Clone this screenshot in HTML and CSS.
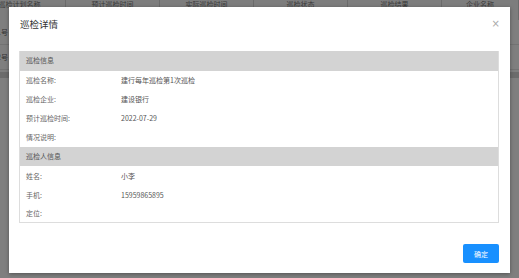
FILE: index.html
```html
<!DOCTYPE html>
<html lang="zh">
<head>
<meta charset="utf-8">
<link rel="stylesheet" href="styles.css">
</head>
<body>
<div class="screen">
  <div class="page">
    <div class="row head">
      <div class="cell c1">巡检计划名称</div>
      <div class="cell">预计巡检时间</div>
      <div class="cell">实际巡检时间</div>
      <div class="cell">巡检状态</div>
      <div class="cell">巡检结果</div>
      <div class="cell">企业名称</div>
    </div>
    <div class="row body-row">
      <div class="cell c1 tail">计划1号</div>
      <div class="cell"></div><div class="cell"></div><div class="cell"></div><div class="cell"></div><div class="cell"></div>
    </div>
    <div class="row body-row">
      <div class="cell c1 tail">计划2号</div>
      <div class="cell"></div><div class="cell"></div><div class="cell"></div><div class="cell"></div><div class="cell"></div>
    </div>
    <div class="scrollbar"></div>
  </div>
</div>

<div class="mask"></div>

<div class="modal">
  <div class="modal-header">
    <span class="modal-title">巡检详情</span>
    <span class="modal-close">×</span>
  </div>
  <div class="detail">
    <div class="section">巡检信息</div>
    <div class="item"><span class="label">巡检名称:</span><span class="value">建行每年巡检第1次巡检</span></div>
    <div class="item"><span class="label">巡检企业:</span><span class="value">建设银行</span></div>
    <div class="item"><span class="label">预计巡检时间:</span><span class="value">2022-07-29</span></div>
    <div class="item"><span class="label">情况说明:</span><span class="value"></span></div>
    <div class="section">巡检人信息</div>
    <div class="item"><span class="label">姓名:</span><span class="value">小李</span></div>
    <div class="item"><span class="label">手机:</span><span class="value">15959865895</span></div>
    <div class="item last"><span class="label">定位:</span><span class="value"></span></div>
  </div>
  <div class="modal-footer">
    <button class="btn-primary">确定</button>
  </div>
</div>
</body>
</html>
```

FILE: styles.css
```css
* { box-sizing: border-box; }
html, body { margin: 0; padding: 0; }
body {
  width: 519px;
  height: 278px;
  overflow: hidden;
  background: #fff;
  font-family: "Noto Sans CJK SC", "Noto Sans", sans-serif;
  position: relative;
}

.screen {
  width: 519px;
  height: 278px;
  overflow: hidden;
}
.page {
  margin-left: -26px;
  width: 545px;
}
.row {
  display: grid;
  grid-template-columns: 92px repeat(4, 94px) 77px;
}
.head .cell {
  height: 20px;
  line-height: 8px;
  text-align: center;
  font-size: 7px;
  color: #777;
  border-right: 1px solid #d6d6d6;
  background: #fafafa;
  overflow: hidden;
  white-space: nowrap;
}
.body-row {
  height: 25px;
  border-bottom: 1px solid #e6e6e6;
}
.body-row .cell {
  font-size: 7px;
  color: #666;
  line-height: 25px;
}
.tail { text-align: right; padding-right: 58px; white-space: nowrap; }
.scrollbar {
  margin-top: 2px;
  height: 6px;
  background: #d8d8d8;
}

.mask {
  position: absolute;
  inset: 0;
  background: rgba(0, 0, 0, 0.5);
}

.modal {
  position: absolute;
  left: 9px;
  top: 7px;
  width: 501px;
  height: 266px;
  background: #fff;
  padding: 0 11px 0 10px;
  box-shadow: 0 1px 4px rgba(0,0,0,0.35);
  display: flex;
  flex-direction: column;
}
.modal-header {
  height: 44px;
  display: flex;
  align-items: flex-start;
  justify-content: space-between;
  padding-top: 11px;
}
.modal-title {
  font-size: 9.5px;
  color: #333;
  line-height: 12px;
  margin-left: 1px;
}
.modal-close {
  font-family: "DejaVu Sans", sans-serif;
  font-size: 10px;
  line-height: 10px;
  color: #aaa;
  margin-top: 1px;
  margin-right: -1px;
}

.detail {
  border: 1px solid #ddd;
  border-top: none;
}
.section {
  height: 19.5px;
  line-height: 19.5px;
  background: #d3d3d3;
  font-size: 7px;
  color: #555;
  padding-left: 6px;
}
.item {
  display: flex;
  height: 19px;
  align-items: center;
  font-size: 7px;
  color: #666;
  padding-left: 6px;
}
.item.last { height: 18px; }
.label { width: 95px; }
.value { color: #555; }

.modal-footer {
  display: flex;
  justify-content: flex-end;
  margin-top: 21px;
}
.btn-primary {
  width: 36px;
  height: 19px;
  border: none;
  border-radius: 2px;
  background: #1890ff;
  color: #fff;
  font-family: "Noto Sans CJK SC", sans-serif;
  font-size: 7px;
  padding: 0;
}
```
